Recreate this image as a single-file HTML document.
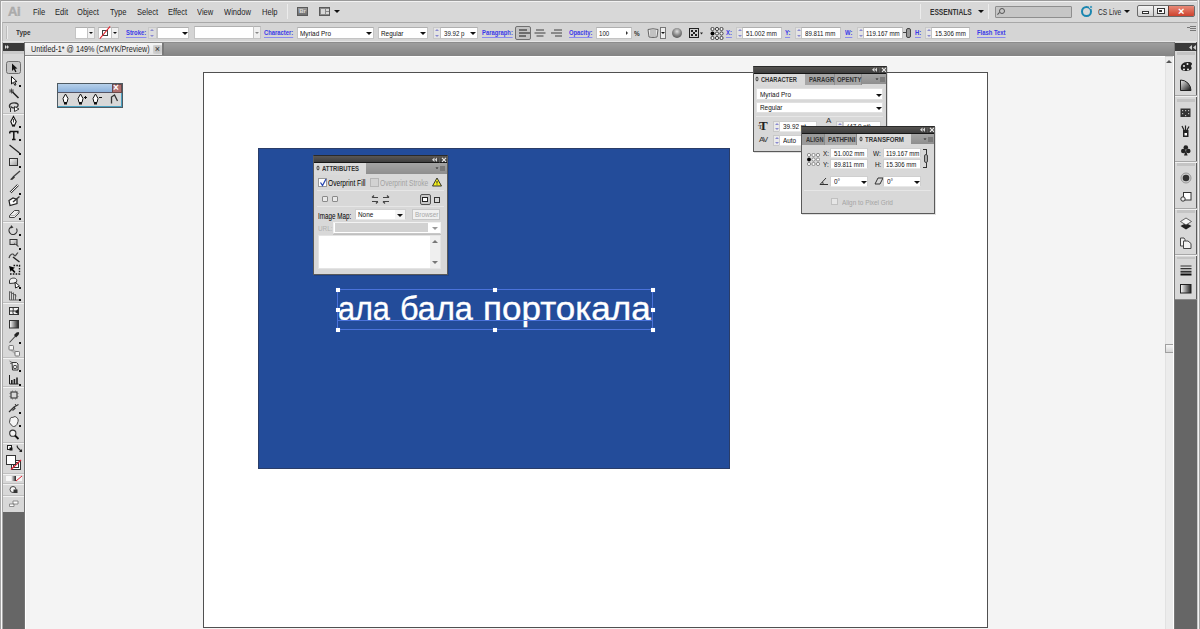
<!DOCTYPE html>
<html><head><meta charset="utf-8">
<style>
*{box-sizing:border-box;margin:0;padding:0}
html,body{width:1200px;height:629px;overflow:hidden;background:#cfcfcf;font-family:"Liberation Sans",sans-serif;position:relative}
.a{position:absolute}
.t{position:absolute;white-space:nowrap;line-height:1;color:#2a2a2a}
.m{font-size:9px;color:#1e1e1e;top:8px;transform:scaleX(.84);transform-origin:0 0}
.c{font-size:8px;top:29px;color:#111;transform:scaleX(.8);transform-origin:0 0}
.n{transform:scaleX(.8);font-size:7.7px}
.lb{font-size:8px;top:29px;color:#3a3ae8;font-weight:bold;border-bottom:1px solid #8a8af0;padding-bottom:0px;transform:scaleX(.73);transform-origin:0 0}
.inp{position:absolute;background:#fff;border:1px solid #c4c4c4;border-top-color:#b0b0b0}
.spin{position:absolute;background:#e4e4e4;border:1px solid #c8c8c8}
.spin:before{content:"";position:absolute;left:1px;top:1px;border-left:2px solid transparent;border-right:2px solid transparent;border-bottom:2px solid #8a8ad0}
.spin:after{content:"";position:absolute;left:1px;bottom:1px;border-left:2px solid transparent;border-right:2px solid transparent;border-top:2px solid #8a8ad0}
.dd{position:absolute;width:0;height:0;border-left:3px solid transparent;border-right:3px solid transparent;border-top:3px solid #111}
.sep{position:absolute;width:1px;background:#b0b0b0;border-right:1px solid #ececec}

.pnl{position:absolute;background:#d8d8d8;box-shadow:1px 1px 0 rgba(0,0,0,.12)}
.pb{position:absolute;left:0;top:0;right:0;bottom:0;border:1px solid #5a5a5a;border-top-color:#2a2a2a}
.ph{position:absolute;left:0;top:0;right:0;height:7px;background:linear-gradient(#5a5754,#3e3e3e);border-bottom:1px solid #161616}
.tabs{position:absolute;left:0;top:7px;right:0;height:11px;background:linear-gradient(#a4a4a4,#8e8e8e)}
.tab{position:absolute;top:0;height:11px;font-size:8px;font-weight:bold;line-height:11px;color:#333;white-space:nowrap}
.tab span{display:inline-block;transform:scaleX(.74);transform-origin:0 0}
.act{background:#dadada;border-bottom:none;height:12px}
.pt{position:absolute;white-space:nowrap;line-height:1;font-size:8px;color:#111;transform:scaleX(.8);transform-origin:0 0}
.pi{position:absolute;background:#fff;border:1px solid #cfcfcf;border-bottom-color:#e8e8e8}
.hsep{position:absolute;height:1px;background:#bcbcbc;border-bottom:1px solid #e6e6e6}
.mnu{position:absolute;top:3px;width:9px;height:5px}
</style></head><body>
<!-- ===== window frame ===== -->
<div class="a" style="left:0;top:0;width:1200px;height:1px;background:#9a9a9a"></div>
<div class="a" style="left:0;top:0;width:1px;height:629px;background:#a4a4a4"></div>
<div class="a" style="left:1px;top:1px;width:1196px;height:21px;background:#d8d8d8;border-top:1px solid #f2f2f2;border-left:1px solid #f2f2f2"></div>
<div class="a" style="left:1197px;top:0;width:3px;height:629px;background:#a4a4a4;border-left:1px solid #c8c8c8;border-right:1px solid #a4a4a4;box-shadow:inset 1px 0 0 #f4f4f4"></div>

<!-- ===== menu bar ===== -->
<div class="t" style="left:8px;top:5px;font-size:13px;font-weight:bold;color:#ababab;letter-spacing:-0.4px;-webkit-text-stroke:0.5px #a8a8a8;text-shadow:0 1px 0 #eee">Ai</div>
<div class="t m" style="left:33px">File</div>
<div class="t m" style="left:55px">Edit</div>
<div class="t m" style="left:77px">Object</div>
<div class="t m" style="left:110px">Type</div>
<div class="t m" style="left:137px">Select</div>
<div class="t m" style="left:168px">Effect</div>
<div class="t m" style="left:197px">View</div>
<div class="t m" style="left:224px">Window</div>
<div class="t m" style="left:262px">Help</div>
<div class="sep" style="left:287px;top:4px;height:15px"></div>
<div class="a" style="left:297px;top:7px;width:11px;height:9px;background:linear-gradient(#9a9a9a,#6e6e6e);border:1px solid #5a5a5a;color:#ddd;font-size:6px;font-weight:bold;line-height:7px;text-align:center">Br</div>
<div class="a" style="left:319px;top:7px;width:11px;height:9px;background:#8a8a8a;border:1px solid #5a5a5a"><div class="a" style="left:1px;top:1px;width:4px;height:5px;background:#d8d8d8"></div><div class="a" style="left:6px;top:1px;width:3px;height:2px;background:#d8d8d8"></div><div class="a" style="left:6px;top:4px;width:3px;height:2px;background:#d8d8d8"></div></div>
<div class="dd" style="left:334px;top:10px"></div>

<div class="sep" style="left:920px;top:4px;height:15px"></div>
<div class="t" style="left:930px;top:7px;font-size:9.5px;font-weight:bold;color:#333;transform:scaleX(.7);transform-origin:0 0">ESSENTIALS</div>
<div class="dd" style="left:978px;top:10px"></div>
<div class="sep" style="left:988px;top:4px;height:15px"></div>
<div class="a" style="left:995px;top:6px;width:77px;height:12px;background:#c6c6c6;border:1px solid #8e8e8e;border-radius:1px"></div>
<div class="a" style="left:999px;top:8px;width:6px;height:6px;border:1px solid #555;border-radius:50%"></div>
<div class="a" style="left:997px;top:13px;width:3px;height:1px;background:#555;transform:rotate(-45deg)"></div>
<div class="a" style="left:1081px;top:6px;width:11px;height:11px;border:2.6px solid #1a86b0;border-radius:50%"></div>
<div class="a" style="left:1089px;top:5px;width:4px;height:4px;background:#1a8ab4;border-radius:50%;border:1px solid #d8d8d8"></div>
<div class="t" style="left:1098px;top:8px;font-size:9px;color:#2a2a2a;transform:scaleX(.74);transform-origin:0 0">CS Live</div>
<div class="dd" style="left:1124px;top:10px"></div>
<!-- window buttons -->
<div class="a" style="left:1137px;top:5px;width:58px;height:12px;border:1px solid #6a6a6a;border-radius:2px;background:linear-gradient(#f4f4f4,#d0d0d0);overflow:hidden">
  <div class="a" style="left:15px;top:0;width:1px;height:12px;background:#6a6a6a"></div>
  <div class="a" style="left:30px;top:0;width:28px;height:12px;background:linear-gradient(#e88a78,#c8341f);border-left:1px solid #6a3a30"></div>
  <div class="a" style="left:4px;top:5px;width:7px;height:3px;border:1px solid #333;background:#fff"></div>
  <div class="a" style="left:19px;top:2px;width:8px;height:6px;border:1px solid #333;background:#fff"></div>
  <div class="a" style="left:21px;top:4px;width:3px;height:2px;background:#333"></div>
  <div class="t" style="left:40px;top:0px;font-size:11px;font-weight:bold;color:#fff">×</div>
</div>

<!-- ===== control bar ===== -->
<div class="a" style="left:2px;top:22px;width:1195px;height:20px;background:#d5d5d5;border-top:1px solid #a8a8a8;border-left:1px solid #b8b8b8;border-bottom:1px solid #e6e6e6"></div>
<div class="a" style="left:6px;top:26px;width:2px;height:13px;background:#bdbdbd;border-right:1px solid #ebebeb"></div>
<div class="t c" style="left:16px;font-weight:bold;color:#333">Type</div>
<div class="inp" style="left:75px;top:27px;width:13px;height:12px"></div>
<div class="inp" style="left:87px;top:27px;width:8px;height:12px;background:#f0f0f0"></div><div class="dd" style="left:89px;top:32px;border-width:2px 2px 0 2px"></div>
<div class="inp" style="left:98px;top:27px;width:14px;height:12px"></div>
<div class="a" style="left:102px;top:30px;width:6px;height:6px;border:1px solid #444"></div>
<div class="a" style="left:97px;top:32px;width:16px;height:1px;background:#e0202a;transform:rotate(-50deg)"></div>
<div class="inp" style="left:111px;top:27px;width:8px;height:12px;background:#f0f0f0"></div><div class="dd" style="left:113px;top:32px;border-width:2px 2px 0 2px"></div>
<div class="t lb" style="left:126px">Stroke:</div>
<div class="spin" style="left:148px;top:27px;width:9px;height:12px;background:#dcdcdc"></div>
<div class="inp" style="left:157px;top:27px;width:32px;height:12px"></div><div class="dd" style="left:182px;top:32px"></div>
<div class="inp" style="left:194px;top:26px;width:60px;height:13px"></div>
<div class="inp" style="left:253px;top:26px;width:8px;height:13px;background:#efefef"></div><div class="dd" style="left:255px;top:32px;border-top-color:#888;border-width:2px 2px 0 2px"></div>
<div class="t lb" style="left:264px">Character:</div>
<div class="inp" style="left:297px;top:27px;width:77px;height:12px"></div>
<div class="t c" style="left:300px;top:30px">Myriad Pro</div><div class="dd" style="left:366px;top:32px"></div>
<div class="inp" style="left:378px;top:27px;width:50px;height:12px"></div>
<div class="t c" style="left:381px;top:30px">Regular</div><div class="dd" style="left:420px;top:32px"></div>
<div class="spin" style="left:433px;top:27px;width:8px;height:12px"></div>
<div class="inp" style="left:440px;top:27px;width:38px;height:12px"></div>
<div class="t c n" style="left:444px;top:30px">39.92 p</div><div class="dd" style="left:470px;top:32px"></div>
<div class="t lb" style="left:482px">Paragraph:</div>
<div class="a" style="left:515px;top:26px;width:16px;height:14px;border:1px solid #707070;border-radius:2px;background:#c4c4c4"></div>
<svg class="a" style="left:517px;top:28px" width="46" height="10">
 <g fill="#6e6e6e"><rect x="2" y="1" width="8" height="2"/><rect x="2" y="4" width="11" height="2"/><rect x="2" y="7" width="7" height="2"/></g>
 <g fill="#8a8a8a"><rect x="19" y="1" width="8" height="2"/><rect x="17.5" y="4" width="11" height="2"/><rect x="19.5" y="7" width="7" height="2"/></g>
 <g fill="#8a8a8a"><rect x="37" y="1" width="8" height="2"/><rect x="34" y="4" width="11" height="2"/><rect x="38" y="7" width="7" height="2"/></g>
</svg>
<div class="t lb" style="left:569px">Opacity:</div>
<div class="inp" style="left:596px;top:27px;width:36px;height:12px"></div>
<div class="t c n" style="left:599px;top:30px">100</div>
<div class="a" style="left:626px;top:31px;border-left:2px solid #333;border-top:2px solid transparent;border-bottom:2px solid transparent"></div>
<div class="t c" style="left:634px;top:30px;font-weight:bold;color:#333">%</div>
<svg class="a" style="left:647px;top:27px" width="12" height="12"><path d="M1 2.5 Q6 1 11 2.5 L10 10 Q6 11 2 10 Z" fill="#e8e8e8" stroke="#666" stroke-width="1"/><path d="M4 3V9.5M6 2.8V10M8 3V9.5" stroke="#888" stroke-width=".8"/></svg>
<div class="a" style="left:660px;top:27px;width:6px;height:12px;border:1px solid #777;background:#eee"></div><div class="dd" style="left:661px;top:32px;border-width:2px 2px 0 2px"></div>
<div class="a" style="left:672px;top:28px;width:10px;height:10px;border-radius:50%;background:radial-gradient(circle at 50% 35%,#e0e0e0 0,#8a8a8a 45%,#3a3a3a 100%)"></div>
<svg class="a" style="left:688px;top:27px" width="16" height="12"><rect x="1.5" y="1.5" width="9" height="9" fill="#cfcfcf" stroke="#222" stroke-width="1"/><g fill="#222"><rect x="3" y="3" width="2" height="2"/><rect x="7" y="3" width="2" height="2"/><rect x="5" y="5" width="2" height="2"/><rect x="3" y="7" width="2" height="2"/><rect x="7" y="7" width="2" height="2"/></g><path d="M12 5.5H15L13.5 7.5Z" fill="#222"/></svg>
<svg class="a" style="left:710px;top:27px" width="14" height="13"><g fill="#f6f6f6" stroke="#333" stroke-width=".9"><circle cx="2.5" cy="2" r="1.6"/><circle cx="7" cy="2" r="1.6"/><circle cx="11.5" cy="2" r="1.6"/><circle cx="7" cy="6.5" r="1.6"/><circle cx="11.5" cy="6.5" r="1.6"/><circle cx="2.5" cy="11" r="1.6"/><circle cx="7" cy="11" r="1.6"/><circle cx="11.5" cy="11" r="1.6"/></g><circle cx="2.5" cy="6.5" r="2" fill="#000"/></svg>
<div class="t lb" style="left:726px">X:</div>
<div class="spin" style="left:736px;top:27px;width:7px;height:12px"></div>
<div class="inp" style="left:742px;top:27px;width:40px;height:12px"></div>
<div class="t c n" style="left:746px;top:30px">51.002 mm</div>
<div class="t lb" style="left:785px">Y:</div>
<div class="spin" style="left:795px;top:27px;width:7px;height:12px"></div>
<div class="inp" style="left:801px;top:27px;width:40px;height:12px"></div>
<div class="t c n" style="left:805px;top:30px">89.811 mm</div>
<div class="t lb" style="left:845px">W:</div>
<div class="spin" style="left:857px;top:27px;width:7px;height:12px"></div>
<div class="inp" style="left:863px;top:27px;width:40px;height:12px"></div>
<div class="t c n" style="left:866px;top:30px">119.167 mm</div>
<div class="a" style="left:903px;top:32px;width:3px;height:1px;background:#444"></div>
<div class="a" style="left:906px;top:28px;width:5px;height:10px;border:1px solid #444;border-radius:2px;background:#999"></div>
<div class="t lb" style="left:915px">H:</div>
<div class="spin" style="left:925px;top:27px;width:7px;height:12px"></div>
<div class="inp" style="left:931px;top:27px;width:39px;height:12px"></div>
<div class="t c n" style="left:935px;top:30px">15.306 mm</div>
<div class="t lb" style="left:977px">Flash Text</div>
<div class="a" style="left:1190px;top:26px;width:6px;height:5px;background:repeating-linear-gradient(#777 0 1px,transparent 1px 2px)"></div><div class="a" style="left:1187px;top:27px;width:3px;height:1px;background:#777"></div>

<!-- ===== tab bar ===== -->
<div class="a" style="left:25px;top:42px;width:1149px;height:14px;background:linear-gradient(#a0a0a0,#848484)"></div>
<div class="a" style="left:25px;top:42px;width:1149px;height:1px;background:#8c8c8c"></div>
<div class="a" style="left:25px;top:43px;width:139px;height:12px;background:linear-gradient(#f4f4f4,#e4e4e4);border-right:2px solid #7a7a7a"></div>
<div class="t" style="left:31px;top:45px;font-size:9px;color:#1e1e1e;transform:scaleX(.8);transform-origin:0 0">Untitled-1* @ 149% (CMYK/Preview)</div>
<div class="a" style="left:153px;top:45px;width:9px;height:9px;background:radial-gradient(#bbb,#d8d8d8);border-radius:1px;color:#333;font-size:9px;line-height:8px;text-align:center">×</div>

<!-- ===== canvas ===== -->
<div class="a" style="left:26px;top:56px;width:1139px;height:573px;background:#f4f4f4;border-top:1px solid #fff"></div>
<!-- scrollbar -->
<div class="a" style="left:1165px;top:57px;width:9px;height:572px;background:#ececec;border-left:1px solid #e2e2e2"></div>
<div class="a" style="left:1166px;top:60px;border-left:3px solid transparent;border-right:3px solid transparent;border-bottom:3px solid #555"></div>
<div class="a" style="left:1165px;top:344px;width:9px;height:9px;background:linear-gradient(#f6f6f6,#d6d6d6);border:1px solid #a0a0a0"></div>

<!-- artboard -->
<div class="a" style="left:203px;top:72px;width:785px;height:556px;background:#fff;border:1px solid #505050"></div>
<!-- blue rect -->
<div class="a" style="left:258px;top:148px;width:472px;height:321px;background:#234c9a;border:1px solid #2a3d68"></div>

<!-- ===== left toolbar ===== -->
<div class="a" style="left:1px;top:22px;width:1px;height:607px;background:#fbfbfb"></div>
<div class="a" style="left:2px;top:42px;width:1px;height:587px;background:#a8a8a8"></div>
<div class="a" style="left:3px;top:42px;width:22px;height:587px;background:#d8d8d8;border-right:1px solid #747474"></div>
<div class="a" style="left:3px;top:43px;width:21px;height:8px;background:#3a3a3a"></div>
<div class="a" style="left:5px;top:45px;border-left:2px solid #ddd;border-top:2px solid transparent;border-bottom:2px solid transparent"></div>
<div class="a" style="left:7px;top:45px;border-left:2px solid #ddd;border-top:2px solid transparent;border-bottom:2px solid transparent"></div>
<div class="a" style="left:3px;top:512px;width:21px;height:117px;background:#666"></div>
<div class="a" style="left:25px;top:56px;width:1px;height:573px;background:#fff"></div>


<!-- ===== tool icons ===== -->
<svg class="a" style="left:0;top:0" width="26" height="629" viewBox="0 0 26 629">
 <defs>
  <linearGradient id="gr1" x1="0" x2="1"><stop offset="0" stop-color="#fff"/><stop offset="1" stop-color="#222"/></linearGradient>
  <linearGradient id="gr2" x1="0" y1="0" x2="1" y2="1"><stop offset="0" stop-color="#fafafa"/><stop offset="1" stop-color="#9a9a9a"/></linearGradient>
 </defs>
 <rect x="3" y="51" width="21" height="3" fill="#cacaca"/>
 <!-- separators -->
 <g fill="#bfbfbf"><rect x="3" y="113" width="21" height="1"/><rect x="3" y="221" width="21" height="1"/><rect x="3" y="302" width="21" height="1"/><rect x="3" y="357" width="21" height="1"/><rect x="3" y="386" width="21" height="1"/><rect x="3" y="442" width="21" height="1"/><rect x="3" y="473" width="21" height="1"/><rect x="3" y="483" width="21" height="1"/><rect x="3" y="495" width="21" height="1"/></g>
 <g fill="#f2f2f2"><rect x="3" y="114" width="21" height="1"/><rect x="3" y="222" width="21" height="1"/><rect x="3" y="303" width="21" height="1"/><rect x="3" y="358" width="21" height="1"/><rect x="3" y="387" width="21" height="1"/><rect x="3" y="443" width="21" height="1"/><rect x="3" y="474" width="21" height="1"/><rect x="3" y="484" width="21" height="1"/><rect x="3" y="496" width="21" height="1"/></g>
 <!-- selection (pressed) -->
 <rect x="6.5" y="61.5" width="14" height="12" rx="2" fill="#c6c6c6" stroke="#6e6e6e"/>
 <path d="M12 63.5 L12 71 L13.8 69.3 L15.3 72.3 L16.5 71.7 L15.1 68.8 L17.4 68.6 Z" fill="#111"/>
 <!-- direct selection -->
 <path d="M11.5 76.5 L11.5 84 L13.3 82.3 L14.8 85.3 L16 84.7 L14.6 81.8 L16.9 81.6 Z" fill="#fff" stroke="#111" stroke-width="1"/>
 <rect x="19" y="85" width="2" height="2" fill="#111"/>
 <!-- magic wand -->
 <path d="M11.5 88.5 V93.5 M9 91 H14 M9.7 89.2 L13.3 92.8 M13.3 89.2 L9.7 92.8" stroke="#333" stroke-width=".8"/>
 <path d="M12.5 92 L18.5 98" stroke="#222" stroke-width="1.6"/>
 <!-- lasso -->
 <path d="M10 108 C8 104 12 102.5 15.5 103 C19 103.5 19 106.5 16 107.5 C14 108.3 11.5 108 11 106.5" fill="none" stroke="#333" stroke-width="1.3"/>
 <path d="M10.5 108 L10.5 112 M14.5 106.5 L14.5 111.5 L19 109 Z" stroke="#333" stroke-width="1" fill="#fff"/>
 <!-- pen -->
 <path d="M13.5 116.5 L16.2 121.5 L14.8 125 L12.2 125 L10.8 121.5 Z" fill="#fff" stroke="#111" stroke-width="1.1"/>
 <path d="M13.5 119 V122.5" stroke="#111" stroke-width=".8"/><rect x="12" y="125" width="3" height="1.6" fill="#111"/>
 <rect x="19" y="126" width="2" height="2" fill="#111"/>
 <!-- type -->
 <path d="M9.8 131.5 H17.8 V133.5 M9.8 131.5 V133.5 M13.8 131.5 V139.5 M12 139.5 H15.6" stroke="#111" stroke-width="1.5" fill="none"/>
 <rect x="19" y="139" width="2" height="2" fill="#111"/>
 <!-- line -->
 <path d="M9.5 145 L19.5 153" stroke="#222" stroke-width="1.2"/>
 <rect x="19" y="153" width="2" height="2" fill="#111"/>
 <!-- rectangle -->
 <rect x="9.5" y="158.5" width="8" height="7" fill="url(#gr2)" stroke="#333"/>
 <rect x="19" y="166" width="2" height="2" fill="#111"/>
 <!-- paintbrush -->
 <path d="M20 171 L13 177" stroke="#444" stroke-width="1.4"/><path d="M13.5 176 L10 179.5 L12 180 L15 177.5 Z" fill="#333"/>
 <!-- pencil -->
 <path d="M18 185 L10.5 192.5" stroke="#333" stroke-width="2.4"/><path d="M18 185 L10.5 192.5" stroke="#fafafa" stroke-width="1"/>
 <rect x="19" y="193" width="2" height="2" fill="#111"/>
 <!-- blob brush -->
 <path d="M9 200.5 L13 198 L17 199.5 L17 203.5 L10 205.5 Z" fill="#fff" stroke="#222" stroke-width="1.2"/><path d="M13 202 L19.5 196.5" stroke="#333" stroke-width="1.4"/>
 <!-- eraser -->
 <path d="M9.5 215.5 L14.5 210.5 L19 210.5 L19 213 L14.5 217.5 L9.5 217.5 Z" fill="#ececec" stroke="#444" stroke-width="1"/><path d="M9.5 215.5 H14.5 L19 211" stroke="#888" stroke-width=".6" fill="none"/>
 <rect x="19" y="218" width="2" height="2" fill="#111"/>
 <!-- rotate -->
 <path d="M16.5 228.5 A4 4 0 1 1 11 227" fill="none" stroke="#333" stroke-width="1.2"/><path d="M11 225 L13.5 227.5 L10.5 228.5 Z" fill="#333"/>
 <rect x="19" y="234" width="2" height="2" fill="#111"/>
 <!-- scale -->
 <rect x="10" y="239.5" width="7" height="5" fill="url(#gr2)" stroke="#333"/><path d="M14 243.5 L17 245.5 H18 V247" stroke="#555" fill="none"/>
 <rect x="19" y="248" width="2" height="2" fill="#111"/>
 <!-- width/warp -->
 <path d="M9 258 C10 254 13 253 14 255 C15 257 16 255 18 252.5" fill="none" stroke="#444" stroke-width="1.2"/><path d="M13 257 L19.5 262" stroke="#222" stroke-width="1.4"/>
 <!-- free transform -->
 <path d="M10 274 H19.5 V265.5 H13" fill="none" stroke="#111" stroke-width="1.4" stroke-dasharray="1.6 1.2"/><path d="M9 266 L15 267.8 L13 269 L15.5 272 L14.2 273 L11.8 270.2 L10.5 271.8 Z" fill="#000"/>
 <!-- shape builder -->
 <path d="M9.5 281 C9.5 278.5 13 277.5 15.5 278.5 C17.5 279.5 17 282 15.5 283 L9.5 283.5 Z" fill="#f0f0f0" stroke="#333"/><path d="M15 282 L15.5 288 L19.5 286 Z" fill="#fff" stroke="#222"/>
 <rect x="19" y="287" width="2" height="2" fill="#111"/>
 <!-- perspective grid -->
 <path d="M9.5 291.5 V300 H19 M11.5 291.5 V300 M13.5 292.5 V300 M15.5 294 V300 M9.5 291.5 L16.5 296" fill="none" stroke="#555" stroke-width=".9"/>
 <rect x="19" y="299" width="2" height="2" fill="#111"/>
 <!-- mesh -->
 <rect x="9.5" y="307.5" width="9" height="7" fill="#f2f2f2" stroke="#333"/><path d="M9.5 311 H18.5 M13 307.5 C14 310 12 312 13.5 314.5" stroke="#333" fill="none"/><path d="M15 312 L18 309 V314 Z" fill="#222"/>
 <!-- gradient -->
 <rect x="9.5" y="320.5" width="9" height="7.5" fill="url(#gr1)" stroke="#333"/>
 <!-- eyedropper -->
 <path d="M9.5 342.5 L15.5 336" stroke="#444" stroke-width="1.1"/><path d="M14 335 L16.5 332.5 L18.5 332 L19.2 333 L18.5 335 L16 337.5 Z" fill="#222"/>
 <rect x="19" y="342" width="2" height="2" fill="#111"/>
 <!-- blend -->
 <path d="M11.5 349.5 L16.5 353.5" stroke="#b4b4b4" stroke-width="3"/><rect x="9" y="345.5" width="4.5" height="4.5" rx=".8" fill="#f4f4f4" stroke="#6a6a6a" stroke-width=".9"/><rect x="15" y="351.5" width="4.5" height="4.5" rx=".8" fill="#f4f4f4" stroke="#6a6a6a" stroke-width=".9"/>
 <!-- symbol sprayer -->
 <path d="M9.5 361 L12 362.5 M10 363.5 L12 363" stroke="#555" stroke-width=".8"/><path d="M12 362.5 H16.5 L18 364 V370 H12.5 Z" fill="#ececec" stroke="#333"/><ellipse cx="15" cy="367" rx="2" ry="1.6" fill="none" stroke="#444"/>
 <rect x="19" y="370" width="2" height="2" fill="#111"/>
 <!-- column graph -->
 <path d="M9.5 375 V384 H18.5" fill="none" stroke="#222" stroke-width="1"/><rect x="11" y="380" width="1.6" height="4" fill="#222"/><rect x="13.6" y="379" width="1.6" height="5" fill="#222"/><rect x="16.2" y="377.5" width="1.6" height="6.5" fill="#222"/>
 <rect x="19" y="384" width="2" height="2" fill="#111"/>
 <!-- artboard -->
 <rect x="11" y="392" width="6" height="6" fill="none" stroke="#333" stroke-width="1.1"/><path d="M9.5 393.5 H11 M17 393.5 H18.5 M9.5 396.5 H11 M17 396.5 H18.5 M12.5 390.5 V392 M15.5 390.5 V392 M12.5 398 V399.5 M15.5 398 V399.5" stroke="#666" stroke-width=".8"/>
 <!-- slice -->
 <path d="M9 412 L14 407 L18.5 404.5 M14 407 L15 408.5 L12.5 410.5" stroke="#333" stroke-width="1.2" fill="none"/><path d="M15 404 L16.5 406" stroke="#333" stroke-width="1"/>
 <rect x="19" y="412" width="2" height="2" fill="#111"/>
 <!-- hand -->
 <path d="M10 419.5 C10 417.5 12 417 13 417.5 C14 416 16.5 416.5 17 418 C18.5 418.5 18.5 421 17.5 423 C17 425 15.5 426.5 13.5 426.5 C11.5 426 10.5 424 9.5 422.5 Z" fill="#f4f4f4" stroke="#444" stroke-width="1"/>
 <rect x="19" y="425" width="2" height="2" fill="#111"/>
 <!-- zoom -->
 <circle cx="12.8" cy="433.2" r="3.1" fill="#f4f4f4" stroke="#333" stroke-width="1.1"/><path d="M15 435.5 L18.5 439" stroke="#111" stroke-width="1.8"/>
 <!-- default fill/stroke & swap -->
 <rect x="7.5" y="445.5" width="4" height="4" fill="#fff" stroke="#222"/><rect x="9.5" y="447.5" width="3" height="3" fill="#111"/>
 <path d="M17 445.5 L17.5 447.5 L21 451 M19.5 451.5 H21.5 V449.5" stroke="#222" stroke-width="1.1" fill="none"/>
 <!-- fill & stroke -->
 <rect x="11.5" y="460.5" width="9" height="9" fill="#fff" stroke="#333"/><rect x="13.5" y="462.5" width="5" height="5" fill="#fff" stroke="#333"/>
 <path d="M11 469.5 L21 460" stroke="#e02030" stroke-width="1.2"/>
 <rect x="6.5" y="455.5" width="9" height="9" fill="#fff" stroke="#333"/>
 <!-- color/gradient/none -->
 <rect x="6" y="476" width="5" height="5" fill="#f6f6f6"/><rect x="11" y="476" width="5" height="5" fill="url(#gr1)"/><rect x="16" y="476" width="6" height="5" fill="#f6f6f6"/><path d="M16 481 L22 476" stroke="#e02030" stroke-width="1"/>
 <!-- draw mode -->
 <circle cx="13" cy="489.5" r="3" fill="#f6f6f6" stroke="#444"/><rect x="13.5" y="489.5" width="4" height="3.5" fill="#333"/>
 <!-- screen mode -->
 <path d="M9.5 504 H14 V506.5 H9.5 Z M13 501 H18 V504 H13 Z" fill="#fafafa" stroke="#777" stroke-width=".8"/>
</svg>

<!-- ===== right dock ===== -->
<div class="a" style="left:1173px;top:56px;width:1px;height:573px;background:#fff"></div>
<div class="a" style="left:1174px;top:42px;width:23px;height:587px;background:#d8d8d8;border-left:1px solid #7a7a7a;border-right:1px solid #5a5a5a"></div>
<div class="a" style="left:1175px;top:43px;width:22px;height:8px;background:#3a3a3a"></div>
<svg class="a" style="left:1189px;top:45px" width="7" height="5"><path d="M3 0L0 2.5L3 5ZM7 0L4 2.5L7 5Z" fill="#d0d0d0"/></svg>
<div class="a" style="left:1175px;top:299px;width:22px;height:330px;background:#666;border-top:1px solid #888"></div>
<svg class="a" style="left:1174px;top:0" width="26" height="300" viewBox="1174 0 26 300">
 <defs>
  <linearGradient id="dg1" x1="0" y1="0" x2="1" y2="1"><stop offset="0" stop-color="#f4f4f4"/><stop offset="1" stop-color="#111"/></linearGradient>
  <linearGradient id="dg2" x1="0" x2="1"><stop offset="0" stop-color="#fff"/><stop offset="1" stop-color="#222"/></linearGradient>
 </defs>
 <g fill="#c4c4c4"><rect x="1177" y="52" width="18" height="3"/><rect x="1177" y="99" width="18" height="3"/><rect x="1177" y="163" width="18" height="3"/><rect x="1177" y="210" width="18" height="3"/><rect x="1177" y="257" width="18" height="2"/></g>
 <g fill="#a8a8a8"><rect x="1175" y="95" width="22" height="1"/><rect x="1175" y="161" width="22" height="1"/><rect x="1175" y="208" width="22" height="1"/><rect x="1175" y="254" width="22" height="1"/></g>
 <g fill="#f0f0f0"><rect x="1175" y="96" width="22" height="1"/><rect x="1175" y="162" width="22" height="1"/><rect x="1175" y="209" width="22" height="1"/><rect x="1175" y="255" width="22" height="1"/></g>
 <!-- color palette -->
 <path d="M1181 69 C1180 65 1183 62 1187 62 C1191 61.5 1193 63 1191.5 65 C1190 66.5 1192.5 67 1191.5 69 C1190 71.5 1182 72 1181 69 Z" fill="#222"/>
 <g fill="#eee"><circle cx="1184" cy="66" r="1"/><circle cx="1187.5" cy="64" r="1"/><circle cx="1184" cy="69.5" r="1"/><circle cx="1188" cy="69.5" r="1"/></g>
 <!-- color guide -->
 <path d="M1180.5 80 A10.5 10.5 0 0 1 1191 90.5 L1180.5 90.5 Z" fill="url(#dg1)" stroke="#222" stroke-width="1"/>
 <!-- swatches -->
 <rect x="1180.5" y="108.5" width="10" height="8.5" fill="#333"/>
 <g fill="#bbb"><rect x="1182" y="110" width="1.2" height="1.2"/><rect x="1185" y="110" width="1.2" height="1.2"/><rect x="1188" y="110" width="1.2" height="1.2"/><rect x="1182" y="113" width="1.2" height="1.2"/><rect x="1188" y="113" width="1.2" height="1.2"/><rect x="1185" y="115" width="1.2" height="1.2"/></g>
 <!-- brushes -->
 <path d="M1182 126 L1184 130 M1185.5 125.5 V130 M1189 126.5 L1187 130" stroke="#222" stroke-width="1.2"/>
 <rect x="1183" y="130" width="5.5" height="7" fill="#222"/><rect x="1184.5" y="133" width="2.5" height="2.5" fill="#fff"/>
 <!-- symbols club -->
 <g fill="#222"><circle cx="1185.8" cy="147.5" r="2.3"/><circle cx="1183.3" cy="151" r="2.3"/><circle cx="1188.3" cy="151" r="2.3"/><path d="M1185.8 150 L1184 155.5 H1187.6 Z"/></g>
 <!-- appearance circle -->
 <circle cx="1186" cy="178" r="5" fill="#cfcfcf" stroke="#999" stroke-width="1"/><circle cx="1186" cy="178" r="3.3" fill="#333"/>
 <!-- graphic styles -->
 <rect x="1183.5" y="192.5" width="7.5" height="7.5" fill="#fff" stroke="#333"/><circle cx="1183" cy="199" r="2.2" fill="#eee" stroke="#333"/>
 <!-- layers -->
 <path d="M1186 223 L1191.5 226 L1186 229.5 L1180.5 226 Z" fill="#222"/>
 <path d="M1186 218 L1191.5 221.5 L1186 225 L1180.5 221.5 Z" fill="#f4f4f4" stroke="#444" stroke-width=".8"/>
 <!-- artboards -->
 <path d="M1180.5 238 H1184 L1185 239.5 V246 H1180.5 Z" fill="#f2f2f2" stroke="#444"/><path d="M1183.5 241 H1188 L1191 243.5 V248.5 H1183.5 Z" fill="#f2f2f2" stroke="#444"/>
 <!-- stroke -->
 <rect x="1180.5" y="265.5" width="11" height="1" fill="#333"/><rect x="1180.5" y="268" width="11" height="1.3" fill="#333"/><rect x="1180.5" y="270.8" width="11" height="1.8" fill="#333"/><rect x="1180.5" y="273.5" width="11" height="2" fill="#111"/>
 <!-- gradient -->
 <rect x="1180.5" y="284.5" width="10.5" height="8.5" fill="url(#dg2)" stroke="#222"/>
</svg>

<!-- ===== ATTRIBUTES panel ===== -->
<div class="pnl" style="left:313px;top:155px;width:135px;height:120px"><div class="a" style="left:1px;top:1px;width:133px;height:118px">
 <div class="ph"><svg class="a" style="left:118px;top:1px" width="15" height="6"><path d="M2.5 0.5L0 2.8L2.5 5ZM5 0.5L2.8 2.8L5 5Z" fill="#d8d8d8"/><path d="M7.5 0.5V5.5" stroke="#5a5a5a" stroke-width="1"/><path d="M10 0.8L14 4.8M14 0.8L10 4.8" stroke="#e8e8e8" stroke-width="1.2"/></svg></div>
 <div class="tabs"><div class="tab act" style="left:0;width:52px;padding-left:2px"><svg width="4" height="6" style="vertical-align:0px;margin-right:2px"><path d="M2 0.5L4 2.5H0ZM2 5.5L4 3.5H0Z" fill="#444"/></svg><span>ATTRIBUTES</span></div>
   <svg class="a" style="left:121px;top:2px" width="11" height="7"><path d="M0.5 2.5H3.5L2 4Z" fill="#222"/><rect x="5" y="1" width="5" height="5" fill="#7a7a7a"/></svg></div>
 <div class="a" style="left:4px;top:22px;width:9px;height:9px;background:#fff;border:1px solid #999"></div>
 <svg class="a" style="left:5px;top:22px" width="8" height="9"><path d="M1.5 4.5 L3.5 7.5 L7 1" fill="none" stroke="#2a48b0" stroke-width="1.3"/></svg>
 <div class="pt" style="left:14px;top:23px;color:#000;font-size:8.5px;transform:scaleX(.78)">Overprint Fill</div>
 <div class="a" style="left:56px;top:22px;width:9px;height:9px;background:#d2d2d2;border:1px solid #b6b6b6"></div>
 <div class="pt" style="left:66px;top:23px;color:#a2a2a2;font-size:8.5px;transform:scaleX(.78)">Overprint Stroke</div>
 <svg class="a" style="left:118px;top:21px" width="10" height="10"><path d="M5 1 L9.5 9 L0.5 9 Z" fill="#f4f01a" stroke="#333" stroke-width="1"/><path d="M5 4 V6.5 M5 7.5 V8" stroke="#222" stroke-width="1"/></svg>
 <div class="hsep" style="left:3px;top:34px;width:127px"></div>
 <div class="a" style="left:8px;top:40px;width:6px;height:6px;border:1px solid #8a8a8a;background:#e8e8e8;border-radius:1px"></div>
 <div class="a" style="left:18px;top:40px;width:6px;height:6px;border:1px solid #8a8a8a;background:#e8e8e8;border-radius:1px"></div>
 <svg class="a" style="left:57px;top:39px" width="22" height="9"><path d="M1 2.5H7M1 6.5H7M1 2.5L3 .5M7 6.5L5 8.5M12 2.5H18M12 6.5H18M18 2.5L16 .5M12 6.5L14 8.5" stroke="#444" stroke-width="1.2" fill="none"/></svg>
 <div class="a" style="left:106px;top:38px;width:11px;height:11px;border:1px solid #555;border-radius:2px;background:#c8c8c8"></div>
 <div class="a" style="left:108px;top:41px;width:6px;height:5px;border:1px solid #222;background:#fff"></div>
 <div class="a" style="left:120px;top:41px;width:6px;height:6px;border:1px solid #333"></div>
 <div class="hsep" style="left:3px;top:50px;width:127px"></div>
 <div class="pt" style="left:4px;top:56px;color:#000;font-size:8.5px;transform:scaleX(.74)">Image Map:</div>
 <div class="pi" style="left:41px;top:53px;width:51px;height:11px"></div>
 <div class="pt" style="left:44px;top:55px">None</div>
 <div class="a" style="left:81px;top:54px;width:10px;height:9px;background:#f4f4f4"></div><div class="dd" style="left:83px;top:58px"></div>
 <div class="a" style="left:98px;top:53px;width:28px;height:11px;background:#f0f0f0;border:1px solid #c6c6c6"></div>
 <div class="pt" style="left:101px;top:55px;color:#a8a8a8">Browser</div>
 <div class="pt" style="left:4px;top:69px;color:#b0b0b0">URL:</div>
 <div class="pi" style="left:19px;top:66px;width:108px;height:12px;border-color:#f2f2f2;border-bottom-color:#c8c8c8;box-shadow:0 1px 0 #c0c0c0"></div>
 <div class="a" style="left:21px;top:67px;width:93px;height:9px;background:#d2d2d2"></div>
 <div class="dd" style="left:118px;top:71px;border-top-color:#999"></div>
 <div class="pi" style="left:4px;top:79px;width:123px;height:34px;border-color:#e4e4e4"></div>
 <div class="a" style="left:116px;top:80px;width:10px;height:32px;background:#efefef"></div>
 <div class="a" style="left:118px;top:84px;border-left:3px solid transparent;border-right:3px solid transparent;border-bottom:3px solid #777"></div>
 <div class="a" style="left:118px;top:105px;border-left:3px solid transparent;border-right:3px solid transparent;border-top:3px solid #777"></div>
</div><div class="pb"></div>
</div>

<!-- ===== CHARACTER panel ===== -->
<div class="pnl" style="left:753px;top:66px;width:134px;height:86px">
 <div class="ph" style="height:8px"><svg class="a" style="left:119px;top:1px" width="15" height="6"><path d="M2.5 0.5L0 2.8L2.5 5ZM5 0.5L2.8 2.8L5 5Z" fill="#d8d8d8"/><path d="M7.5 0.5V5.5" stroke="#5a5a5a" stroke-width="1"/><path d="M10 0.8L14 4.8M14 0.8L10 4.8" stroke="#e8e8e8" stroke-width="1.2"/></svg></div>
 <div class="tabs" style="top:8px;height:10px">
   <div class="tab act" style="left:0;width:52px;padding-left:2px;height:11px"><svg width="4" height="6" style="vertical-align:0px;margin-right:2px"><path d="M2 0.5L4 2.5H0ZM2 5.5L4 3.5H0Z" fill="#444"/></svg><span style="transform:scaleX(.71)">CHARACTER</span></div>
   <div class="tab" style="left:52px;width:30px;padding-left:4px;background:#a6a6a6;border-right:1px solid #8c8c8c"><span>PARAGR</span></div>
   <div class="tab" style="left:82px;width:27px;padding-left:2px;background:#a6a6a6;border-right:1px solid #8c8c8c"><span>OPENTY</span></div>
   <svg class="a" style="left:122px;top:2px" width="11" height="7"><path d="M0.5 2.5H3.5L2 4Z" fill="#222"/><rect x="5" y="1" width="5" height="5" fill="#7a7a7a"/></svg></div>
 <div class="pi" style="left:3px;top:22px;width:127px;height:12px;border-color:#e0e0e0"></div>
 <div class="pt" style="left:7px;top:25px">Myriad Pro</div><div class="dd" style="left:123px;top:28px"></div>
 <div class="pi" style="left:3px;top:36px;width:127px;height:11px;border-color:#e0e0e0"></div>
 <div class="pt" style="left:7px;top:38px">Regular</div><div class="dd" style="left:123px;top:41px"></div>
 <div class="hsep" style="left:3px;top:50px;width:127px"></div>
 <div class="t" style="left:6px;top:53px;font-family:'Liberation Serif',serif;font-size:13px;font-weight:bold;color:#222">T</div>
 <div class="t" style="left:5px;top:58px;font-family:'Liberation Serif',serif;font-size:7px;font-weight:bold;color:#666">T</div>
 <div class="spin" style="left:20px;top:55px;width:7px;height:11px;background:#eaeaea"></div>
 <div class="pi" style="left:26px;top:55px;width:38px;height:11px"></div>
 <div class="pt" style="left:30px;top:57px">39.92 pt</div>
 <div class="t" style="left:73px;top:51px;font-size:8px;color:#333">A</div>
 <div class="spin" style="left:83px;top:55px;width:7px;height:11px;background:#eaeaea"></div>
 <div class="pi" style="left:90px;top:55px;width:38px;height:11px"></div>
 <div class="pt" style="left:94px;top:57px">(47.9 pt)</div>
 <div class="t" style="left:6px;top:70px;font-size:8px;color:#333;letter-spacing:-1px">AV</div>
 <div class="spin" style="left:20px;top:69px;width:7px;height:11px;background:#eaeaea"></div>
 <div class="pi" style="left:26px;top:69px;width:38px;height:11px"></div>
 <div class="pt" style="left:30px;top:71px">Auto</div>
<div class="pb"></div>
</div>

<!-- ===== TRANSFORM panel ===== -->
<div class="pnl" style="left:801px;top:126px;width:134px;height:88px">
 <div class="ph" style="height:8px"><svg class="a" style="left:119px;top:1px" width="15" height="6"><path d="M2.5 0.5L0 2.8L2.5 5ZM5 0.5L2.8 2.8L5 5Z" fill="#d8d8d8"/><path d="M7.5 0.5V5.5" stroke="#5a5a5a" stroke-width="1"/><path d="M10 0.8L14 4.8M14 0.8L10 4.8" stroke="#e8e8e8" stroke-width="1.2"/></svg></div>
 <div class="tabs" style="top:8px;height:10px">
   <div class="tab" style="left:0;width:24px;padding-left:5px;background:#9a9a9a;border-right:1px solid #8a8a8a"><span style="transform:scaleX(.7)">ALIGN</span></div>
   <div class="tab" style="left:24px;width:32px;padding-left:3px;background:#a9a9a9;border-right:1px solid #8a8a8a"><span style="transform:scaleX(.77)">PATHFINI</span></div>
   <div class="tab act" style="left:56px;width:54px;padding-left:2px;height:11px"><svg width="4" height="6" style="vertical-align:0px;margin-right:2px"><path d="M2 0.5L4 2.5H0ZM2 5.5L4 3.5H0Z" fill="#444"/></svg><span style="transform:scaleX(.76)">TRANSFORM</span></div>
   <svg class="a" style="left:122px;top:2px" width="11" height="7"><path d="M0.5 2.5H3.5L2 4Z" fill="#222"/><rect x="5" y="1" width="5" height="5" fill="#7a7a7a"/></svg></div>
 <svg class="a" style="left:6px;top:27px" width="13" height="13"><g fill="#fff" stroke="#777" stroke-width=".8"><circle cx="2" cy="2" r="1.6"/><circle cx="6.5" cy="2" r="1.6"/><circle cx="11" cy="2" r="1.6"/><circle cx="6.5" cy="6.5" r="1.6"/><circle cx="11" cy="6.5" r="1.6"/><circle cx="2" cy="11" r="1.6"/><circle cx="6.5" cy="11" r="1.6"/><circle cx="11" cy="11" r="1.6"/></g><circle cx="2" cy="6.5" r="1.9" fill="#000"/></svg>
 <div class="pt" style="left:22px;top:24px">X:</div>
 <div class="pi" style="left:29px;top:22px;width:38px;height:10px"></div>
 <div class="pt" style="left:33px;top:24px;font-size:7.6px;transform:scaleX(.8)">51.002 mm</div>
 <div class="pt" style="left:22px;top:35px">Y:</div>
 <div class="pi" style="left:29px;top:33px;width:38px;height:10px"></div>
 <div class="pt" style="left:33px;top:35px;font-size:7.6px;transform:scaleX(.8)">89.811 mm</div>
 <div class="pt" style="left:72px;top:24px">W:</div>
 <div class="pi" style="left:82px;top:22px;width:38px;height:10px"></div>
 <div class="pt" style="left:85px;top:24px;font-size:7.6px;transform:scaleX(.8)">119.167 mm</div>
 <div class="pt" style="left:74px;top:35px">H:</div>
 <div class="pi" style="left:82px;top:33px;width:38px;height:10px"></div>
 <div class="pt" style="left:85px;top:35px;font-size:7.6px;transform:scaleX(.8)">15.306 mm</div>
 <div class="a" style="left:122px;top:23px;width:4px;height:19px;border:1px solid #333;border-left:none"></div>
 <div class="a" style="left:123px;top:28px;width:4px;height:9px;border:1px solid #444;border-radius:2px;background:#aaa"></div>
 <svg class="a" style="left:18px;top:51px" width="10" height="8"><path d="M1 7.5H9M1 7.5L7 1M4 7.5A3 3 0 0 0 3.5 5" stroke="#333" stroke-width="1" fill="none"/></svg>
 <div class="pi" style="left:29px;top:50px;width:38px;height:11px"></div>
 <div class="pt" style="left:33px;top:52px">0°</div><div class="dd" style="left:60px;top:55px"></div>
 <svg class="a" style="left:73px;top:51px" width="10" height="8"><path d="M1 7L4 1H9L6 7Z" stroke="#333" stroke-width="1" fill="none"/></svg>
 <div class="pi" style="left:82px;top:50px;width:38px;height:11px"></div>
 <div class="pt" style="left:86px;top:52px">0°</div><div class="dd" style="left:113px;top:55px"></div>
 <div class="hsep" style="left:3px;top:64px;width:127px"></div>
 <div class="a" style="left:30px;top:72px;width:7px;height:7px;background:#e6e6e6;border:1px solid #c0c0c0"></div>
 <div class="pt" style="left:41px;top:73px;color:#a4a4a4">Align to Pixel Grid</div>
<div class="pb"></div>
</div>

<!-- ===== pen tearoff ===== -->
<div class="a" style="left:57px;top:83px;width:66px;height:25px;background:#d8d8d8;border:1px solid #4e5a62">
 <div class="a" style="left:0;top:0;width:64px;height:9px;background:linear-gradient(#b6d0ea,#8cb2dc);border-bottom:1px solid #556"></div>
 <div class="a" style="left:54px;top:0;width:10px;height:9px;background:#b07070;border:1px solid #6a4a4a"></div>
 <div class="t" style="left:55px;top:-1px;font-size:10px;font-weight:bold;color:#fff">×</div>
 <div class="a" style="left:63px;top:9px;width:1px;height:14px;background:#4aa0c0"></div>
 <div class="a" style="left:0;top:22px;width:64px;height:1px;background:#4aa0c0"></div>
 <svg class="a" style="left:0;top:9px" width="64" height="14">
  <g fill="#fff" stroke="#111" stroke-width="1"><path d="M7.5 1 L10 5.5 L9 9.5 L6 9.5 L5 5.5 Z"/><path d="M22.5 1 L25 5.5 L24 9.5 L21 9.5 L20 5.5 Z"/><path d="M37.5 1 L40 5.5 L39 9.5 L36 9.5 L35 5.5 Z"/></g>
  <g fill="#111"><rect x="6" y="9.5" width="3" height="2"/><rect x="21" y="9.5" width="3" height="2"/><rect x="36" y="9.5" width="3" height="2"/><path d="M26 4.5H29M27.5 3V6" stroke="#111" stroke-width="1"/><path d="M41 4.5H44" stroke="#111" stroke-width="1"/></g>
  <path d="M53.5 10.5 V4 L56.5 2 L59.5 8" fill="none" stroke="#333" stroke-width="1.3"/>
 </svg>
</div>

<!-- ===== text + selection ===== -->
<div class="t" style="left:338px;top:291px;font-size:34px;color:#fff;line-height:34px;-webkit-text-stroke:0.35px #fff;transform:scaleX(.9);transform-origin:0 0">ала</div>
<div class="t" style="left:400px;top:291px;font-size:34px;color:#fff;line-height:34px;-webkit-text-stroke:0.35px #fff;transform:scaleX(.955);transform-origin:0 0">бала</div>
<div class="t" style="left:483px;top:291px;font-size:34px;color:#fff;line-height:34px;-webkit-text-stroke:0.35px #fff;transform:scaleX(1.03);transform-origin:0 0">портокала</div>
<div class="a" style="left:337px;top:289px;width:316px;height:41px;border:1px solid #4a72da"></div>
<div class="a" style="left:337px;top:320px;width:316px;height:1px;background:#4a72da"></div>
<div class="a" style="left:336px;top:288px;width:4px;height:4px;background:#fff;box-shadow:0 0 1px #6a8af0"></div>
<div class="a" style="left:336px;top:308px;width:4px;height:4px;background:#fff;box-shadow:0 0 1px #6a8af0"></div>
<div class="a" style="left:336px;top:328px;width:4px;height:4px;background:#fff;box-shadow:0 0 1px #6a8af0"></div>
<div class="a" style="left:493px;top:288px;width:4px;height:4px;background:#fff;box-shadow:0 0 1px #6a8af0"></div>
<div class="a" style="left:493px;top:328px;width:4px;height:4px;background:#fff;box-shadow:0 0 1px #6a8af0"></div>
<div class="a" style="left:651px;top:288px;width:4px;height:4px;background:#fff;box-shadow:0 0 1px #6a8af0"></div>
<div class="a" style="left:651px;top:308px;width:4px;height:4px;background:#fff;box-shadow:0 0 1px #6a8af0"></div>
<div class="a" style="left:651px;top:328px;width:4px;height:4px;background:#fff;box-shadow:0 0 1px #6a8af0"></div>
</body></html>
